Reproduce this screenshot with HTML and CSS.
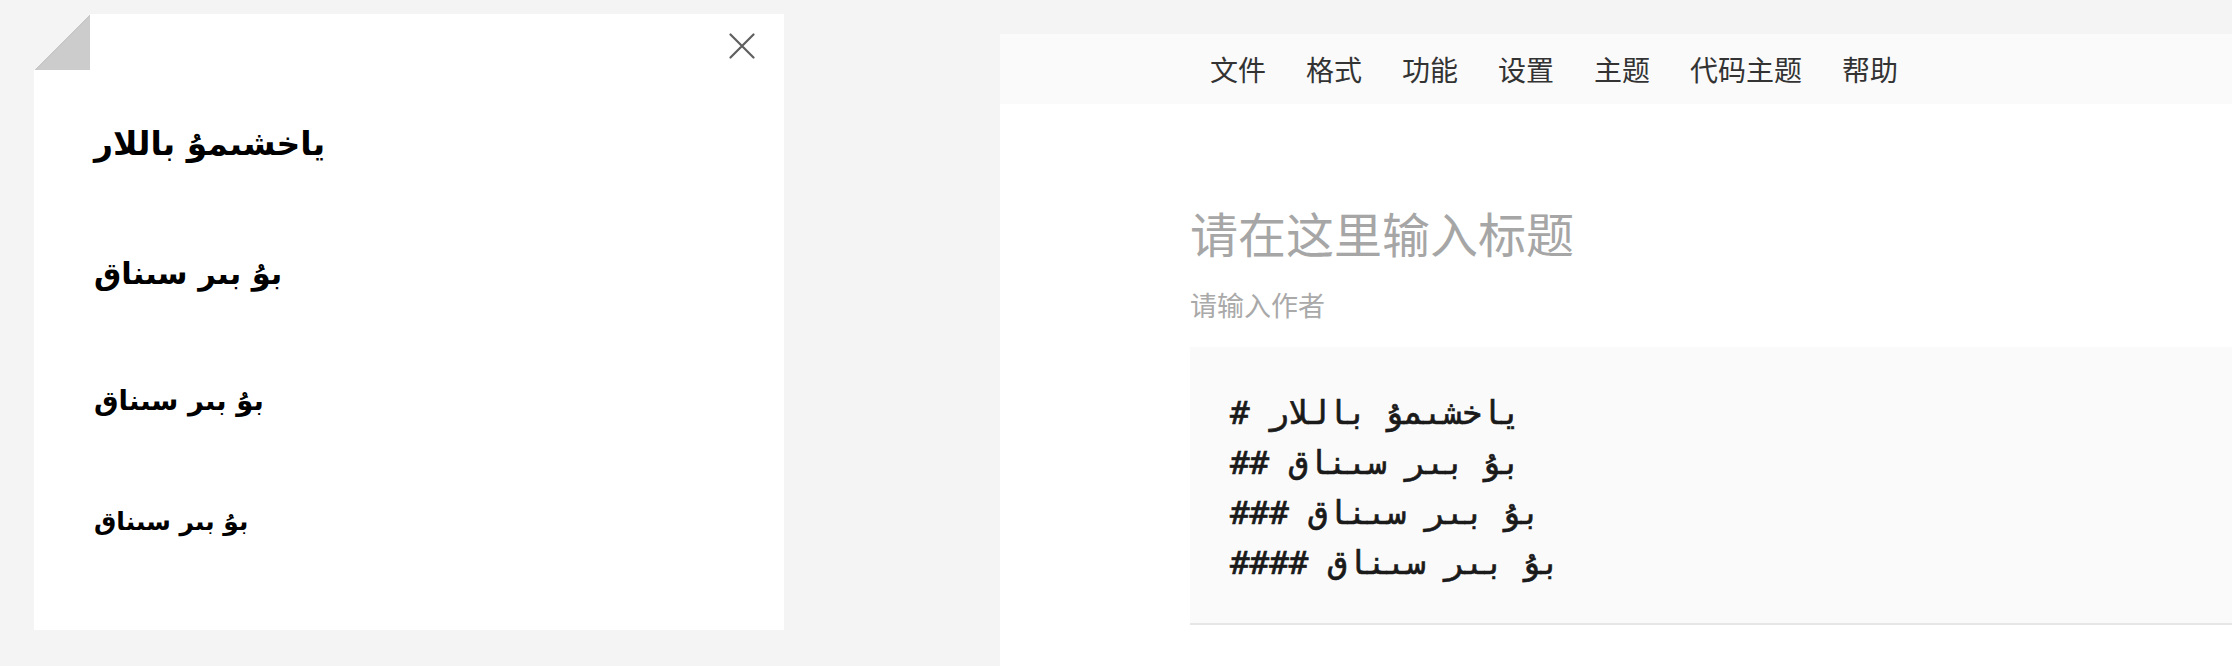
FILE: index.html
```html
<!DOCTYPE html>
<html lang="zh">
<head>
<meta charset="utf-8">
<title>Editor</title>
<link rel="stylesheet" href="styles.css">
</head>
<body>
<div class="page">
  <section class="preview">
    <div class="fold"></div>
    <button class="close" aria-label="close">
      <svg class="close-icon" width="26" height="26" viewBox="0 0 26 26"><path d="M1.5 1.5 L24.5 24.5 M24.5 1.5 L1.5 24.5" stroke="#5f5f5f" stroke-width="2.2" stroke-linecap="round" fill="none"/></svg>
    </button>
    <h1 class="h h1">ياخشىمۇ باللار</h1>
    <h2 class="h h2">بۇ بىر سىناق</h2>
    <h3 class="h h3">بۇ بىر سىناق</h3>
    <h4 class="h h4">بۇ بىر سىناق</h4>
  </section>
  <section class="editor">
    <nav class="menu">
      <span class="item">文件</span>
      <span class="item">格式</span>
      <span class="item">功能</span>
      <span class="item">设置</span>
      <span class="item">主题</span>
      <span class="item">代码主题</span>
      <span class="item">帮助</span>
    </nav>
    <div class="content">
      <div class="title">请在这里输入标题</div>
      <div class="author">请输入作者</div>
      <pre class="code"><span class="line"># ياخشىمۇ باللار</span>
<span class="line">## بۇ بىر سىناق</span>
<span class="line">### بۇ بىر سىناق</span>
<span class="line">#### بۇ بىر سىناق</span></pre>
    </div>
  </section>
</div>
</body>
</html>
```
FILE: styles.css
```css
html, body {
  margin: 0;
  padding: 0;
  background: #f4f4f4;
  overflow: hidden;
}
.page {
  display: flex;
  align-items: flex-start;
  width: 2600px;
  height: 666px;
}
.preview {
  position: relative;
  box-sizing: border-box;
  margin: 14px 0 0 34px;
  width: 750px;
  height: 616px;
  background: #ffffff;
  padding: 100px 60px 0 60px;
}
.fold {
  position: absolute;
  left: 0;
  top: 0;
  width: 56px;
  height: 56px;
  background: linear-gradient(135deg, #f4f4f4 50%, #c4c4c4 50%, #cccccc 53%);
}
.close {
  position: absolute;
  top: 19px;
  right: 29px;
  width: 26px;
  height: 26px;
  padding: 0;
  margin: 0;
  border: 0;
  background: transparent;
}
.close-icon {
  display: block;
}
.h {
  margin: 0;
  font-family: "DejaVu Sans", sans-serif;
  font-weight: bold;
  color: #000;
  height: 60px;
  line-height: 60px;
}
.h1 { font-size: 33px; }
.h2 { font-size: 30.5px; margin-top: 70px; }
.h3 { font-size: 27.5px; margin-top: 66px; }
.h4 { font-size: 25px; margin-top: 62px; }

.editor {
  margin: 34px 0 0 216px;
  width: 1400px;
  height: 640px;
  background: #ffffff;
}
.menu {
  display: flex;
  gap: 40px;
  height: 70px;
  align-items: center;
  padding-left: 210px;
  background: #fafafa;
  font-family: "Noto Sans CJK SC", sans-serif;
  font-size: 28px;
  color: #333;
}
.content {
  padding: 98px 0 0 190px;
}
.title {
  font-family: "Noto Sans CJK SC", sans-serif;
  font-size: 48px;
  line-height: 60px;
  color: #a6a6a6;
}
.author {
  margin-top: 25px;
  font-family: "Noto Sans CJK SC", sans-serif;
  font-size: 27px;
  line-height: 36px;
  color: #a9a9a9;
}
.code {
  margin: 24px 0 0 0;
  padding: 41px 40px 35px 40px;
  background: #fafafa;
  border-bottom: 2px solid #e6e6e6;
  font-family: "DejaVu Sans Mono", monospace;
  font-weight: normal;
  font-size: 32.5px;
  line-height: 50px;
  color: #1a1a1a;
  -webkit-text-stroke: 0.7px #1a1a1a;
  white-space: pre;
}
```
